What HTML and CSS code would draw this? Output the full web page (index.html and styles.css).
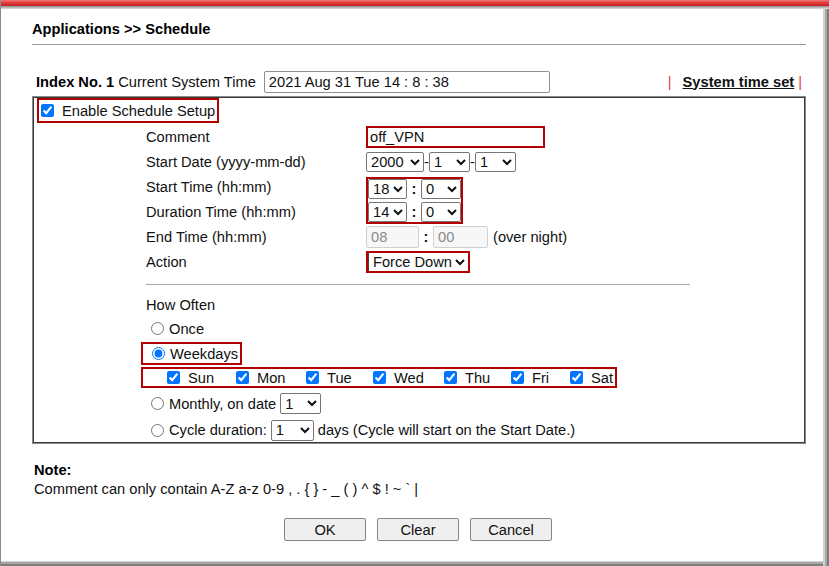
FILE: index.html
```html
<!DOCTYPE html>
<html>
<head>
<meta charset="utf-8">
<title>Applications &gt;&gt; Schedule</title>
<link rel="stylesheet" href="styles.css">
</head>
<body>
<div class="window">
  <div class="topbar"></div>
  <div class="content">
    <h1 class="title">Applications &gt;&gt; Schedule</h1>
    <div class="index-row">
      <b class="idx">Index No. 1</b>
      <span class="cst">Current System Time</span>
      <input class="systime" type="text" value="2021 Aug 31 Tue 14 : 8 : 38">
      <span class="fill"></span>
      <span class="pipe">|</span>
      <a class="timeset">System time set</a>
      <span class="pipe">|</span>
    </div>

    <div class="box">
      <label class="enable hl"><input type="checkbox" checked> Enable Schedule Setup</label>
      <div class="grid">
        <div class="lbl">Comment</div>
        <div class="ctl"><input class="comment" type="text" value="off_VPN"></div>

        <div class="lbl">Start Date (yyyy-mm-dd)</div>
        <div class="ctl">
          <select class="s-year"><option>2000</option></select><span class="dash">-</span><select class="s-md"><option>1</option></select><span class="dash">-</span><select class="s-md"><option>1</option></select>
        </div>

        <div class="lbl">Start Time (hh:mm)</div>
        <div class="ctl span2">
          <div class="timebox">
            <div class="trow"><select class="s-hh"><option>18</option></select><span class="colon">:</span><select class="s-mm"><option>0</option></select></div>
            <div class="trow"><select class="s-hh"><option>14</option></select><span class="colon">:</span><select class="s-mm"><option>0</option></select></div>
          </div>
        </div>
        <div class="lbl">Duration Time (hh:mm)</div>

        <div class="lbl">End Time (hh:mm)</div>
        <div class="ctl">
          <input class="endt e1" type="text" value="08" disabled><span class="colon2">:</span><input class="endt e2" type="text" value="00" disabled><span class="over">(over night)</span>
        </div>

        <div class="lbl">Action</div>
        <div class="ctl"><select class="action"><option>Force Down</option></select></div>
      </div>

      <div class="sep"></div>

      <div class="often">
        <div class="often-h">How Often</div>
        <label class="orow"><input type="radio" name="o"> Once</label>
        <div class="orow"><label class="hl weekdays"><input type="radio" name="o" checked> Weekdays</label></div>
        <div class="days hl">
          <label class="day"><input type="checkbox" checked><span>Sun</span></label>
          <label class="day"><input type="checkbox" checked><span>Mon</span></label>
          <label class="day"><input type="checkbox" checked><span>Tue</span></label>
          <label class="day"><input type="checkbox" checked><span>Wed</span></label>
          <label class="day"><input type="checkbox" checked><span>Thu</span></label>
          <label class="day"><input type="checkbox" checked><span>Fri</span></label>
          <label class="day"><input type="checkbox" checked><span>Sat</span></label>
        </div>
        <div class="orow monthly"><input type="radio" name="o"> Monthly, on date <select class="s-date"><option>1</option></select></div>
        <div class="orow cycle"><input type="radio" name="o"> Cycle duration: <select class="s-cyc"><option>1</option></select> days (Cycle will start on the Start Date.)</div>
      </div>
    </div>

    <div class="note">
      <div class="note-h">Note:</div>
      <div class="note-t">Comment can only contain A-Z a-z 0-9 , . { } - _ ( ) ^ $ ! ~ ` |</div>
    </div>

    <div class="buttons">
      <button class="btn">OK</button>
      <button class="btn">Clear</button>
      <button class="btn">Cancel</button>
    </div>
  </div>
</div>
</body>
</html>
```

FILE: styles.css
```css
html, body {
  margin: 0;
  padding: 0;
  background: #fff;
}
body {
  font-family: "Liberation Sans", Arial, sans-serif;
  font-size: 14.67px;
  color: #111;
}
.window {
  width: 829px;
  height: 566px;
  box-sizing: border-box;
  border-left: 1px solid #8a8a8a;
  background: #fff;
  box-shadow: inset -2px 0 #7d7d7d, inset -4px 0 #a6a6a6, inset -6px 0 #d2d2d2,
              inset 0 -2px #7d7d7d, inset 0 -4px #a6a6a6, inset 0 -5px #d2d2d2;
  overflow: hidden;
}
.topbar {
  height: 9px;
  margin-left: -1px;
  background: linear-gradient(#f07a7a 0, #e64646 2px, #d83030 4px, #c02020 6px, #8c8c8c 6px, #b5b5b5 7.5px, #e0e0e0 9px);
}
.content {
  margin: 0 23px 0 31px;
}
.title {
  margin: 10px 0 0;
  font-size: 14.67px;
  line-height: 20px;
  font-weight: bold;
  padding-bottom: 5px;
  border-bottom: 1px solid #9a9a9a;
  color: #000;
}
.index-row {
  display: flex;
  align-items: center;
  height: 21px;
  margin-top: 26px;
  padding-left: 4px;
  padding-right: 4px;
}
.idx { color: #000; }
.cst { margin-left: 4px; }
.systime {
  margin: 0 0 0 8px;
  width: 286px;
  height: 22px;
  box-sizing: border-box;
  border: 1px solid #8f8f8f;
  border-radius: 2px;
  padding: 0 4px;
  font-family: "Liberation Sans", Arial, sans-serif;
  font-size: 14.67px;
  color: #111;
}
.fill { flex: 1; }
.pipe { color: #e04040; }
.timeset {
  font-weight: bold;
  text-decoration: underline;
  color: #111;
  margin: 0 4px 0 11px;
}
.box {
  margin-top: 4px;
  height: 348px;
  box-sizing: border-box;
  border: 1px solid #8a8a8a;
  box-shadow: inset 0 0 0 1px #3a3a3a;
  padding: 1px 3px 0;
}
.hl {
  border: 2px solid #b30000;
  box-sizing: border-box;
}
.enable {
  display: inline-flex;
  align-items: center;
  height: 25px;
  padding-right: 2px;
  margin-left: 1px;
}
.enable input { margin: 0 8px 0 2px; width: 13px; height: 13px; }
.grid {
  display: grid;
  grid-template-columns: 220px auto;
  grid-auto-rows: 25px;
  margin: 1px 0 0 110px;
}
.lbl, .ctl { display: flex; align-items: center; }
.span2 { grid-row: span 2; grid-column: 2; }
.grid .lbl { grid-column: 1; }
select {
  font-family: "Liberation Sans", Arial, sans-serif;
  font-size: 14.67px;
  height: 20px;
  padding: 0;
  border: 1px solid #767676;
  border-radius: 2px;
  background: #fff;
  color: #111;
  box-sizing: border-box;
}
.comment {
  width: 179px;
  height: 22px;
  box-sizing: border-box;
  border: 2px solid #b30000;
  padding: 0 2px;
  margin: 0;
  font-family: "Liberation Sans", Arial, sans-serif;
  font-size: 14.67px;
  color: #111;
  outline: none;
}
.s-year { width: 58px; }
.s-md { width: 41px; }
.dash { width: 5px; text-align: center; }
.timebox {
  border: 2px solid #b30000;
  display: flex;
  flex-direction: column;
  gap: 3px;
  margin-top: 3px;
}
.trow { display: flex; align-items: center; }
.s-hh { width: 39px; }
.s-mm { width: 40px; }
.colon { width: 14px; text-align: center; font-weight: bold; }
.endt {
  height: 22px;
  box-sizing: border-box;
  border: 1px solid #d0d0d0;
  border-radius: 2px;
  background: #f7f7f7;
  color: #8a8a8a;
  padding: 0 4px;
  margin: 0;
  font-family: "Liberation Sans", Arial, sans-serif;
  font-size: 14.67px;
}
.e1 { width: 53px; }
.e2 { width: 55px; }
.colon2 { width: 14px; text-align: center; font-weight: bold; }
.over { margin-left: 5px; }
.action {
  width: 104px;
  height: 22px;
  border: 2px solid #b30000;
  border-radius: 0;
  box-shadow: inset 1px 0 #444;
  padding-left: 1px;
}
.sep {
  margin: 10px 0 0 110px;
  width: 544px;
  border-top: 1px solid #a8a8a8;
}
.often {
  margin-left: 110px;
  padding-top: 8px;
}
.often-h { height: 23px; display: flex; align-items: center; }
.orow {
  display: flex;
  align-items: center;
  height: 25px;
  padding-left: 4px;
}
.orow input[type=radio], .weekdays input[type=radio] {
  margin: 0 5px 0 1px;
  width: 13px;
  height: 13px;
}
.orow > select { margin: 0 4px; }
.weekdays {
  display: inline-flex;
  align-items: center;
  height: 23px;
  margin-left: -9px;
  padding: 0 2px 0 8px;
}
.days {
  display: flex;
  align-items: center;
  height: 21px;
  margin: 1px 0 0 -5px;
  width: 476px;
  padding-left: 24px;
}
.day { display: flex; align-items: center; }
.day input { margin: 0 8px 0 0; width: 13px; height: 13px; }
.day:nth-child(1) { width: 69px; }
.day:nth-child(2) { width: 70px; }
.day:nth-child(3) { width: 67px; }
.day:nth-child(4) { width: 71px; }
.day:nth-child(5) { width: 67px; }
.day:nth-child(6) { width: 59px; }
.monthly { margin-top: 3px; }
.cycle { height: 28px; }
.s-date { width: 41px; height: 21px; }
.s-cyc { width: 43px; height: 21px; }
.note {
  margin-top: 17px;
  padding-left: 2px;
}
.note-h { font-weight: bold; line-height: 19px; color: #000; }
.note-t { font-size: 14.67px; line-height: 19px; }
.buttons {
  display: flex;
  justify-content: center;
  gap: 11px;
  margin-top: 19px;
  padding-right: 2px;
}
.btn {
  width: 82px;
  height: 23px;
  border: 1px solid #858585;
  border-radius: 2px;
  background: #efefef;
  font-family: "Liberation Sans", Arial, sans-serif;
  font-size: 14.67px;
  color: #111;
  padding: 0;
}
```
